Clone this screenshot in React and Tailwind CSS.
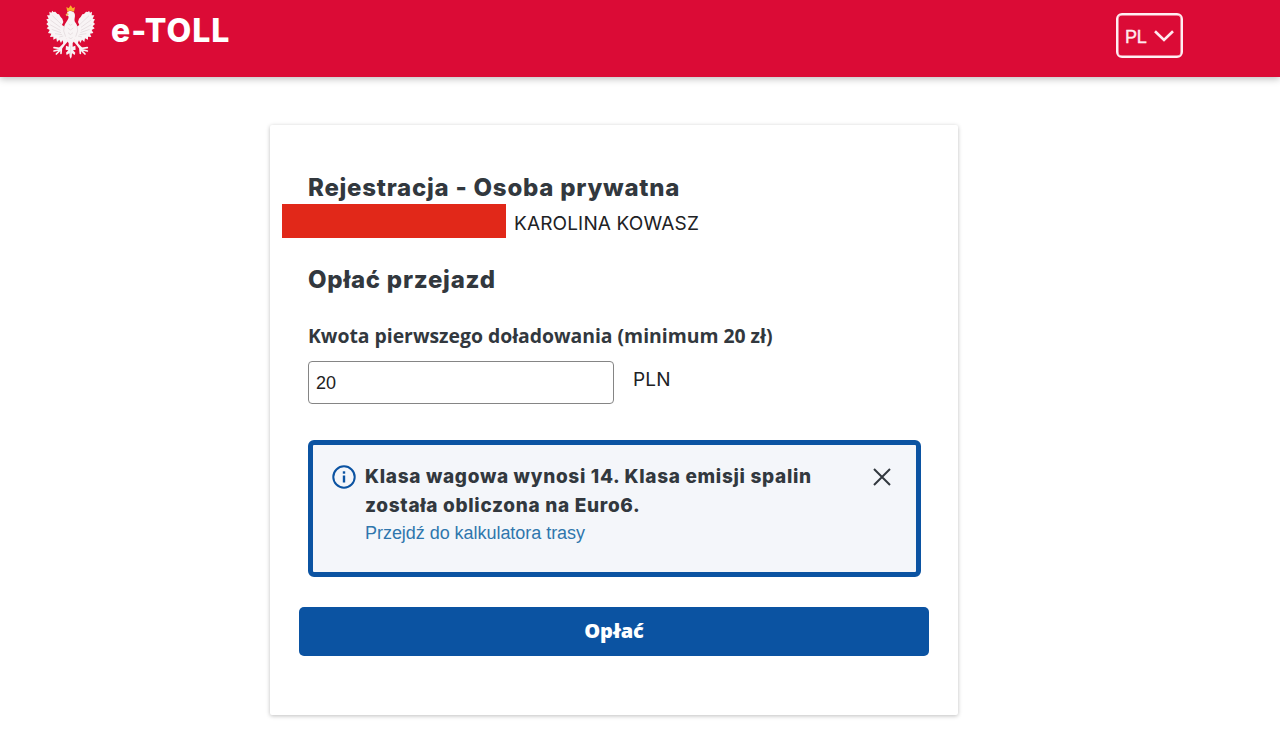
import React, { useState } from 'react';

const Eagle = () => (
  <svg viewBox="0 0 180 192" className="w-[60px] h-16 shrink-0" aria-hidden="true">
    <g fill="#f8f4f5">
      {/* wings */}
      <path d="M37 32 L40 36 L46 35 L52 42 L57 43 L62 51 L67 56 L70 66 L66 75 L74 80 L80 84 L80 114 L75 122 L72 132 L67 121 L63 129 L58 119 L51 126 L49 115 L40 119 L40 110 L30 111 L34 101 L24 99 L29 90 L20 85 L26 79 L19 72 L24 67 L19 58 L26 56 L21 46 L29 46 L28 35 L34 38 Z" />
      <path d="M147 32 L144 36 L138 35 L132 42 L127 43 L122 51 L117 56 L114 66 L118 75 L110 80 L104 84 L104 114 L109 122 L112 132 L117 121 L121 129 L126 119 L133 126 L135 115 L144 119 L144 110 L154 111 L150 101 L160 99 L155 90 L164 85 L158 79 L165 72 L160 67 L165 58 L158 56 L163 46 L155 46 L156 35 L150 38 Z" />
      {/* head and body */}
      <path d="M82 36 C87 31 101 31 104 41 C107 50 101 57 105 66 C115 76 115 96 107 112 L101 126 L92 133 L83 126 L77 112 C69 96 70 76 79 66 C84 59 87 54 85 48 L80 46 Z" />
      {/* legs */}
      <path d="M76 108 L84 124 L75 134 L66 146 L58 149 L57 143 L69 131 Z" />
      <path d="M108 108 L100 124 L109 134 L118 146 L126 149 L127 143 L115 131 Z" />
      {/* tail */}
      <path d="M86 122 L98 122 L98 140 L106 137 L107 149 L99 151 L106 158 L104 165 L96 160 L95 170 L92 176 L89 170 L88 160 L80 165 L78 158 L85 151 L77 149 L78 137 L86 140 Z" />
    </g>
    <g fill="none" stroke="#f8f4f5" strokeWidth="5" strokeLinecap="round">
      <path d="M64 146 L42 143 M62 148 L42 153 M62 149 L49 162 M64 148 L63 160" />
      <path d="M120 146 L142 143 M122 148 L142 153 M122 149 L135 162 M120 148 L121 160" />
    </g>
    {/* feather shading */}
    <g fill="none" stroke="#d6cacf" strokeWidth="1.5">
      <path d="M37 47 L64 73 M31 60 L61 82 M30 74 L61 91 M35 88 L63 98 M45 101 L66 104 M58 111 L70 108 M73 77 Q67 92 77 110" />
      <path d="M147 47 L120 73 M153 60 L123 82 M154 74 L123 91 M149 88 L121 98 M139 101 L118 104 M126 111 L114 108 M111 77 Q117 92 107 110" />
      <path d="M86 72 L91 76 L97 72 M83 84 L91 90 L100 84 M84 98 L91 104 L99 98 M87 112 L92 117 L97 112 M92 137 V164" />
    </g>
    <path d="M82 35 L79 21 L86 25 L92 16 L98 25 L105 21 L102 35 Q92 30 82 35 Z" fill="#f9b02c" />
    <path d="M84 38 L77 43 L79 49 L86 44 Z" fill="#edbd62" />
  </svg>
);

const App = () => {
  const [amount, setAmount] = useState('20');
  const [showInfo, setShowInfo] = useState(true);

  return (
    <div className="h-[750px] overflow-hidden bg-white font-['Inter',sans-serif] text-[#32383e]">
      <header className="flex h-[76.5px] items-start justify-between bg-[#db0b36] pl-10 pr-[97px] shadow-[0_2px_7px_rgba(0,0,0,0.26)]">
        <div className="flex items-start">
          <Eagle />
          <span className="ml-[11px] mt-[11px] text-[32px] leading-10 font-extrabold tracking-[1px] text-white">e-TOLL</span>
        </div>
        <button className="mt-[13px] flex h-[45px] w-[67px] items-center rounded-md border-2 border-[#fff0f3] pl-[7px] font-['Liberation_Sans',sans-serif] text-lg text-[#ffe9ee] shadow-[inset_0_0_0_0.5px_#fff0f3]">
          <span className="mt-0.5 tracking-[-0.2px] [-webkit-text-stroke:0.4px]">PL</span>
          <svg viewBox="0 0 20 12" className="ml-[7px] h-3 w-5" fill="none" stroke="currentColor" strokeWidth="2.6">
            <path d="M1 1.2 L10 10 L19 1.2" />
          </svg>
        </button>
      </header>

      <main className="ml-[270px] mt-[48.5px] h-[590px] w-[688px] rounded-xs bg-white px-[38px] pt-[47px] shadow-[0_1px_4px_rgba(0,0,0,0.26)]">
        <h1 className="h-8 text-2xl leading-8 font-extrabold tracking-[0.76px] whitespace-nowrap">Rejestracja - Osoba prywatna</h1>
        <div className="-ml-[26px] flex h-[34px] items-center">
          <div className="h-[34px] w-56 bg-[#e12819]"></div>
          <span className="ml-2 mt-[6px] text-[19px] tracking-[0.15px] text-[#202124] whitespace-nowrap">KAROLINA KOWASZ</span>
        </div>

        <h2 className="mt-[26px] text-2xl leading-8 font-extrabold tracking-[0.76px]">Opłać przejazd</h2>

        <label htmlFor="amount" className="mt-[26px] block font-['Open_Sans',sans-serif] text-[19.4px] leading-7 font-bold tracking-[-0.02px] whitespace-nowrap">
          Kwota pierwszego doładowania (minimum 20 zł)
        </label>
        <div className="mt-[11px] flex">
          <input
            id="amount"
            type="text"
            value={amount}
            onChange={(e) => setAmount(e.target.value)}
            className="h-[43px] w-[306px] rounded-[4px] border border-[#858585] bg-white px-[7px] pt-px font-['Liberation_Sans',sans-serif] text-lg text-[#222]"
          />
          <span className="ml-[19px] mt-[5px] text-[19px] leading-7 tracking-[0.15px] text-[#202124]">PLN</span>
        </div>

        {showInfo && (
          <section className="mt-9 flex h-[137px] w-[613px] items-start rounded-md border-5 border-[#0b53a2] bg-[#f4f6fa] pl-[19px] pr-[25px] pt-[17px]">
            <svg viewBox="0 0 24 24" className="mt-[3px] h-6 w-6 shrink-0" fill="none" stroke="#0b53a2">
              <circle cx="12" cy="12" r="10.7" strokeWidth="2" />
              <path d="M12 10.5 V17.5" strokeWidth="2.4" />
              <path d="M12 6.3 V8.7" strokeWidth="2.4" />
            </svg>
            <div className="ml-[9px] flex-1">
              <p className="text-[19px] leading-[29px] font-extrabold tracking-[0.69px] whitespace-nowrap">
                Klasa wagowa wynosi 14. Klasa emisji spalin<br />
                została obliczona na Euro6.
              </p>
              <a href="#kalkulator" className="-mt-px block font-['Liberation_Sans',sans-serif] text-lg leading-7 tracking-[-0.04px] text-[#2f76ad]">Przejdź do kalkulatora trasy</a>
            </div>
            <button onClick={() => setShowInfo(false)} aria-label="Zamknij" className="mt-[6px]">
              <svg viewBox="0 0 18 18" className="h-[18px] w-[18px]" fill="none" stroke="#32383e" strokeWidth="2">
                <path d="M1 1 L17 17 M17 1 L1 17" />
              </svg>
            </button>
          </section>
        )}

        <button className="-ml-[9px] mt-[30px] h-[49px] w-[630px] rounded-[5px] bg-[#0b53a2] pb-0.5 font-['Open_Sans',sans-serif] text-xl font-extrabold tracking-[-0.2px] text-white">
          Opłać
        </button>
      </main>
    </div>
  );
};

export default App;
